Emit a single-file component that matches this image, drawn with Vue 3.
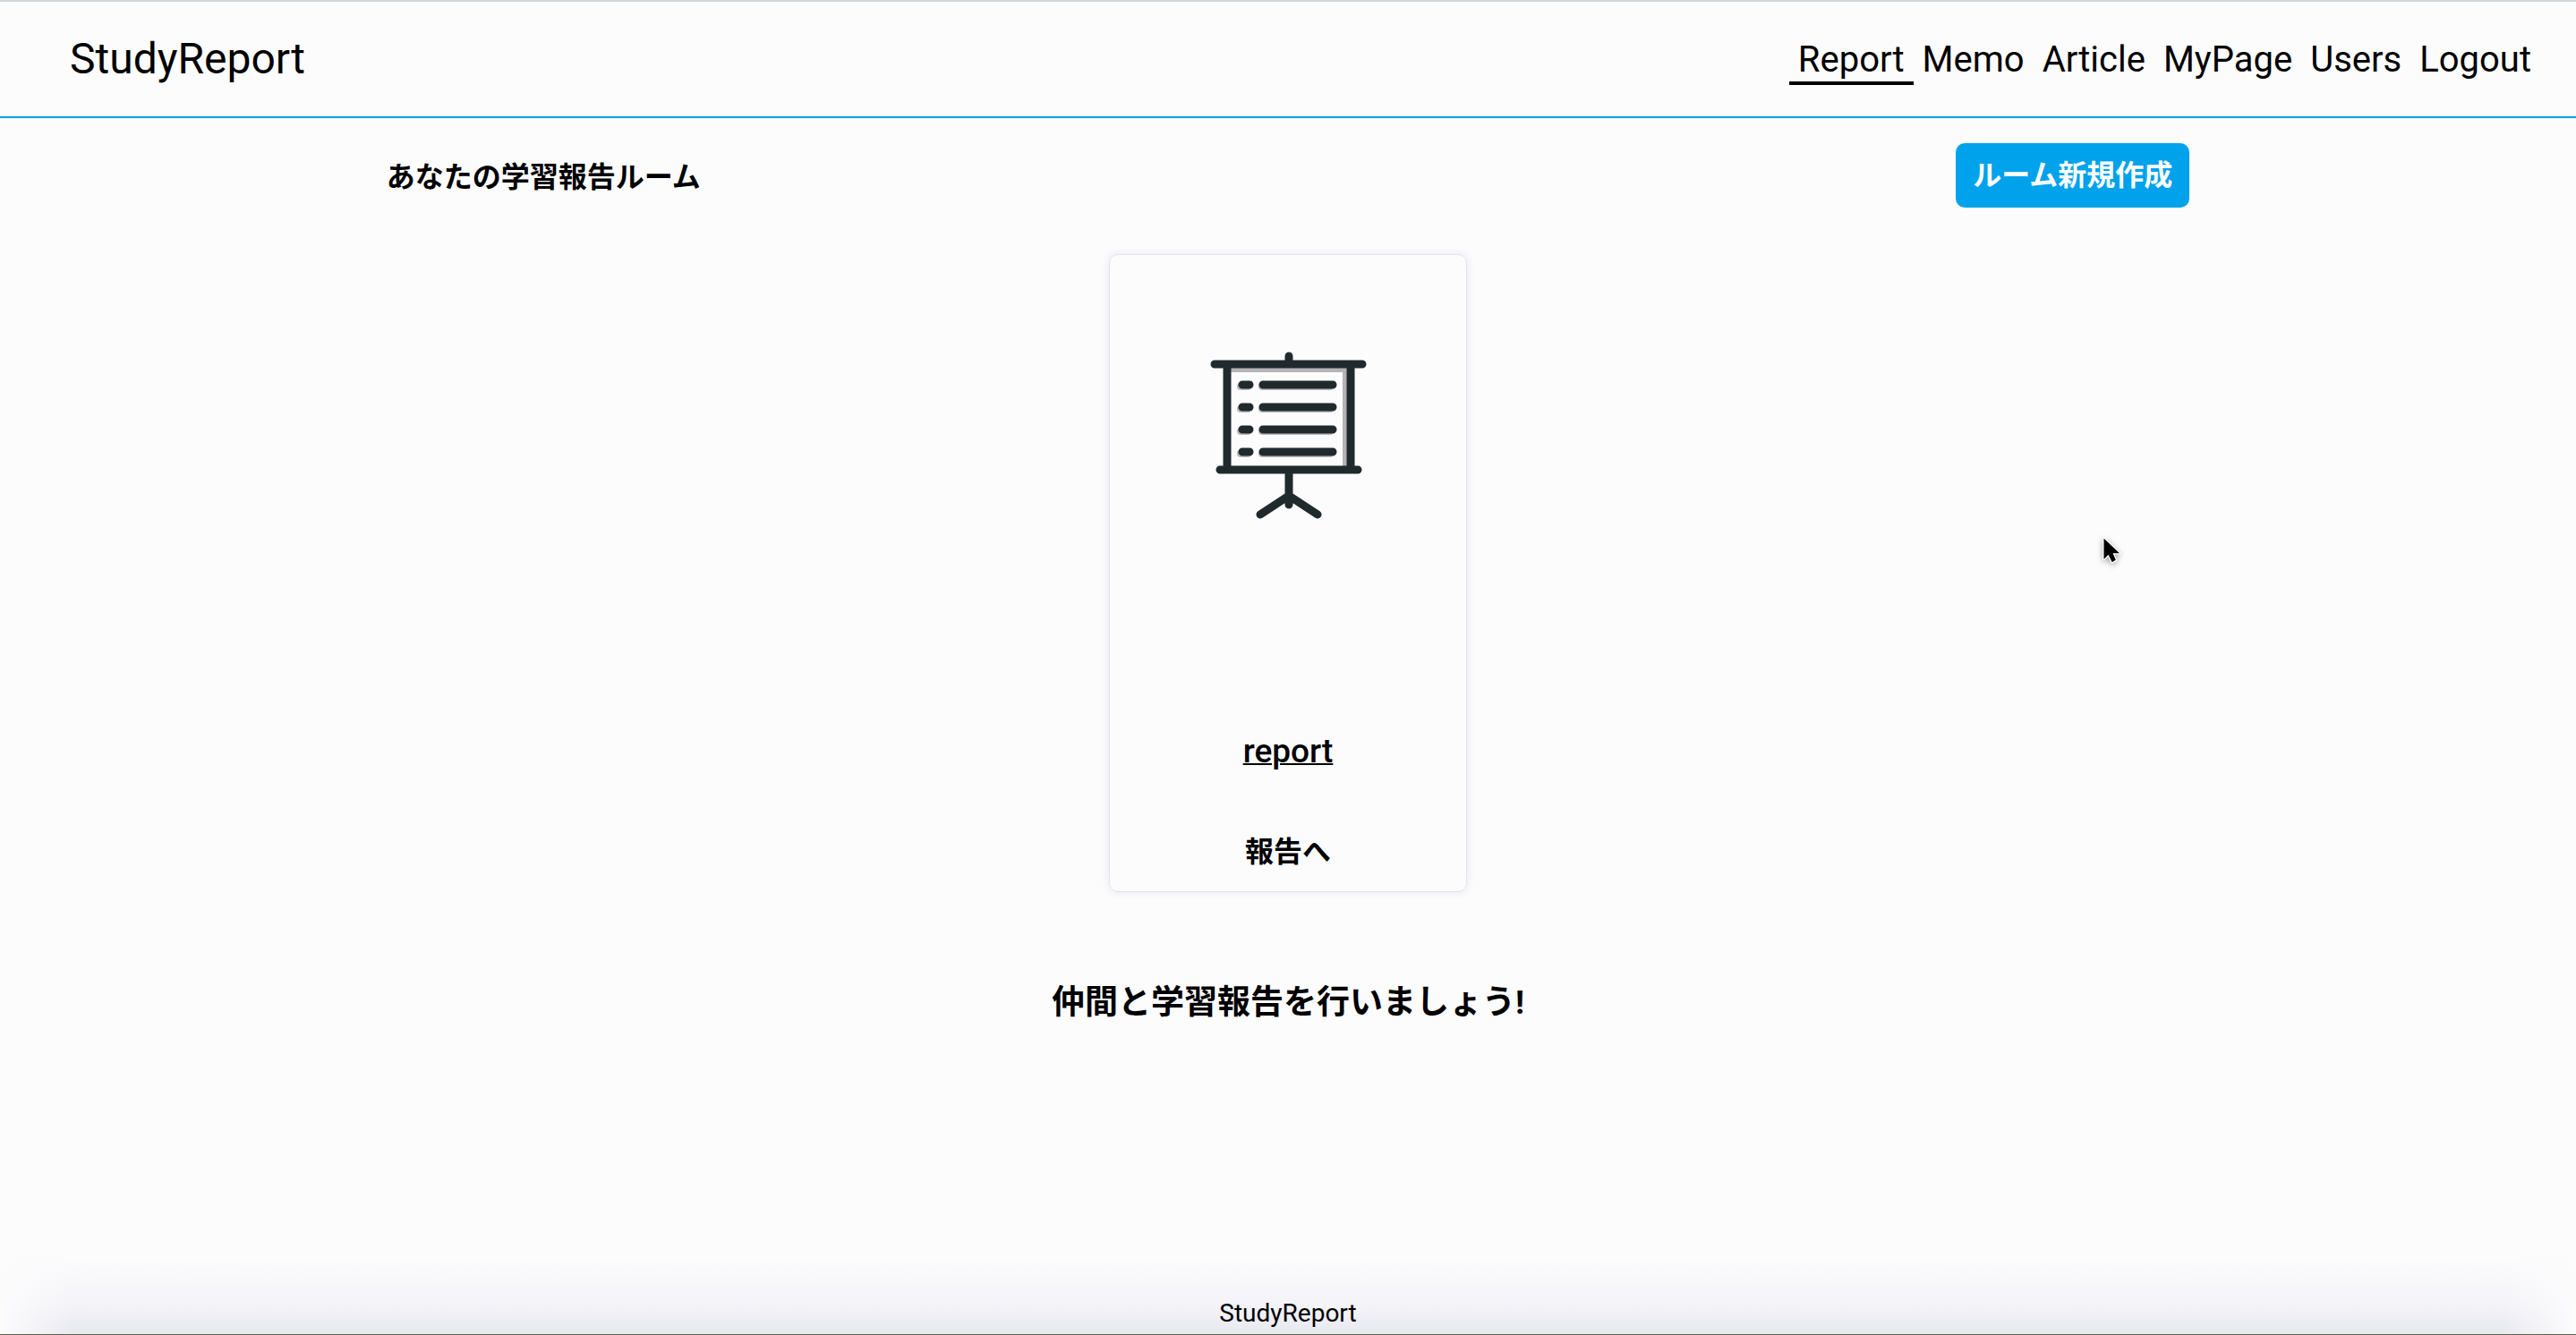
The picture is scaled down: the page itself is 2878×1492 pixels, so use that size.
<script setup>
const links = ['Report', 'Memo', 'Article', 'MyPage', 'Users', 'Logout']
const current = 'Report'
const rows = [69, 94, 119, 144]
</script>

<template>
  <div class="page">
    <header class="header">
      <a class="brand" href="#">StudyReport</a>
      <nav class="nav">
        <a
          v-for="link in links"
          :key="link"
          href="#"
          class="nav-link"
          :class="{ active: link === current }"
        >{{ link }}</a>
      </nav>
    </header>

    <main class="main">
      <div class="toolbar">
        <h1 class="heading">あなたの学習報告ルーム</h1>
        <button class="create" type="button">ルーム新規作成</button>
      </div>

      <article class="card">
        <svg class="board" viewBox="0 0 174 187" aria-hidden="true">
          <g transform="translate(-132 -123)" fill="none" stroke-linecap="round">
            <path d="M155 143H283V251" stroke="#b4b4b6" stroke-width="6" stroke-linecap="butt" />
            <g stroke="#b8b8bc" stroke-width="8">
              <path v-for="y in rows" :key="y" :d="`M166 ${y + 93}h8M190 ${y + 93}h76`" />
            </g>
            <g stroke="#202a2c" stroke-width="9">
              <path v-for="y in rows" :key="y" :d="`M168 ${y + 91}h8M191 ${y + 91}h78`" />
            </g>
            <path
              d="M220 128V136M137 137H302M151 137V255M289 137V255M143 255H297M220 255V294M220 284L188 305M220 284L252 305"
              stroke="#202a2c"
              stroke-width="9"
            />
          </g>
        </svg>
        <h2 class="room"><a href="#">report</a></h2>
        <a class="go" href="#">報告へ</a>
      </article>

      <p class="lead">仲間と学習報告を行いましょう!</p>
    </main>

    <footer class="footer">StudyReport</footer>

    <svg class="pointer" viewBox="0 0 24 36" aria-hidden="true">
      <path
        d="M3 2V30L9 24L14 34L19 31L15 22H24Z"
        fill="#000"
        stroke="#fff"
        stroke-width="3"
        stroke-linejoin="round"
        paint-order="stroke"
      />
    </svg>
  </div>
</template>

<style>
body {
  margin: 0;
  background: #fcfcfd;
}
</style>

<style scoped>
.page {
  position: relative;
  box-sizing: border-box;
  display: flex;
  flex-direction: column;
  min-height: 100vh;
  border-top: 2px solid #cfd6dc;
  border-bottom: 1px solid #606050;
  color: #000;
  font-family: Roboto, "Noto Sans CJK JP", sans-serif;
}

a {
  color: inherit;
  text-decoration: none;
}

.header {
  display: flex;
  align-items: center;
  justify-content: space-between;
  height: 128px;
  padding: 0 40px 0 78px;
  border-bottom: 2px solid #00a0e8;
}

.brand {
  font-size: 48px;
  line-height: 56px;
}

.nav {
  display: flex;
  padding-top: 6px;
}

.nav-link {
  padding: 0 10px;
  border-bottom: 4px solid transparent;
  font-size: 40px;
  line-height: 48px;
}

.nav-link.active {
  border-bottom-color: #000;
}

.main {
  flex: 1;
  display: flex;
  flex-direction: column;
  align-items: center;
}

.toolbar {
  display: flex;
  align-items: center;
  justify-content: space-between;
  width: 70%;
  margin-top: 28px;
}

.heading {
  margin: 4px 0 0;
  font-size: 32px;
  line-height: 48px;
  font-weight: 700;
}

.create {
  height: 72px;
  padding: 0 19px;
  border: 0;
  border-radius: 10px;
  background: #00a2ec;
  color: #fff;
  font-family: inherit;
  font-size: 32px;
  line-height: 72px;
  font-weight: 700;
}

.card {
  box-sizing: border-box;
  display: flex;
  flex-direction: column;
  align-items: center;
  width: 400px;
  margin-top: 52px;
  padding: 108px 20px 20px;
  border: 1px solid #e2e2ea;
  border-radius: 10px;
  box-shadow: 0 0 10px #e6e6f0;
}

.board {
  width: 174px;
  height: 187px;
  overflow: visible;
}

.room {
  margin: 238px 0 0;
  font-size: 37px;
  line-height: 44px;
  font-weight: 500;
}

.room a {
  text-decoration: underline;
  text-decoration-thickness: 2px;
}

.go {
  margin-top: 66px;
  font-size: 32px;
  line-height: 48px;
  font-weight: 700;
}

.lead {
  margin: 96px 0 0;
  font-size: 37px;
  line-height: 56px;
  font-weight: 700;
}

.footer {
  display: flex;
  align-items: flex-end;
  justify-content: center;
  height: 80px;
  padding-bottom: 7px;
  background:
    linear-gradient(to right, #fcfcfd, transparent 80px, transparent calc(100% - 80px), #fcfcfd),
    linear-gradient(to top, #e8e8f0, #f4f4f9 40%, #fcfcfd);
  font-size: 28px;
  line-height: 32px;
}

.pointer {
  position: absolute;
  top: 596px;
  left: 2348px;
  width: 20px;
  height: 34px;
  overflow: visible;
  filter: drop-shadow(0 2px 3px rgba(0, 0, 0, 0.35));
}
</style>
